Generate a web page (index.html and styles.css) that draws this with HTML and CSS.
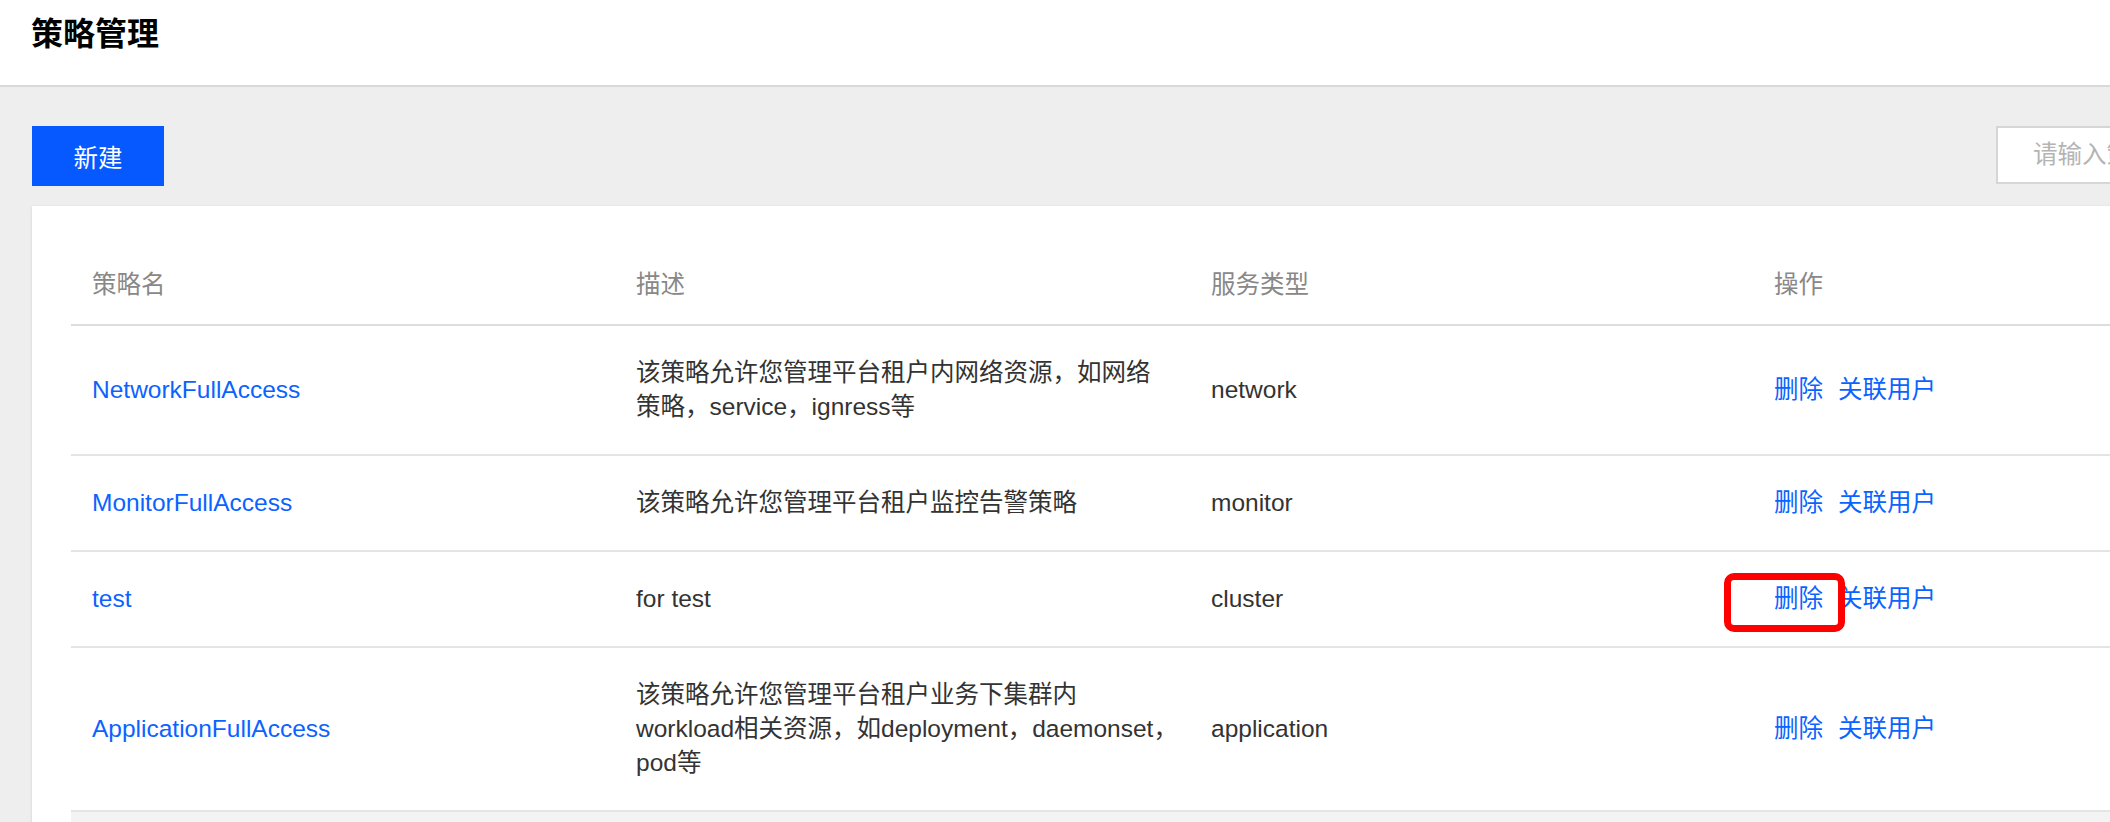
FILE: index.html
```html
<!DOCTYPE html>
<html lang="zh-CN">
<head>
<meta charset="utf-8">
<title>策略管理</title>
<link rel="stylesheet" href="styles.css">
</head>
<body>
<header class="page-header">
  <h1 class="page-title">策略管理</h1>
</header>
<main class="content">
  <div class="toolbar">
    <button class="btn-primary" type="button">新建</button>
    <div class="search">
      <input class="search-input" type="text" placeholder="请输入策略名">
    </div>
  </div>
  <section class="card">
    <div class="table">
      <div class="tr th">
        <div class="td">策略名</div>
        <div class="td">描述</div>
        <div class="td">服务类型</div>
        <div class="td">操作</div>
      </div>
      <div class="tr">
        <div class="td"><a class="link" href="#">NetworkFullAccess</a></div>
        <div class="td desc">该策略允许您管理平台租户内网络资源，如网络<br>策略，service，ignress等</div>
        <div class="td">network</div>
        <div class="td ops"><a class="link op" href="#">删除</a><a class="link op" href="#">关联用户</a></div>
      </div>
      <div class="tr">
        <div class="td"><a class="link" href="#">MonitorFullAccess</a></div>
        <div class="td desc">该策略允许您管理平台租户监控告警策略</div>
        <div class="td">monitor</div>
        <div class="td ops"><a class="link op" href="#">删除</a><a class="link op" href="#">关联用户</a></div>
      </div>
      <div class="tr">
        <div class="td"><a class="link" href="#">test</a></div>
        <div class="td desc">for test</div>
        <div class="td">cluster</div>
        <div class="td ops"><a class="link op marked" href="#">删除</a><a class="link op" href="#">关联用户</a></div>
      </div>
      <div class="tr">
        <div class="td"><a class="link" href="#">ApplicationFullAccess</a></div>
        <div class="td desc">该策略允许您管理平台租户业务下集群内<br>workload相关资源，如deployment，daemonset，<br>pod等</div>
        <div class="td">application</div>
        <div class="td ops"><a class="link op" href="#">删除</a><a class="link op" href="#">关联用户</a></div>
      </div>
      <div class="table-foot"></div>
    </div>
  </section>
</main>
</body>
</html>
```

FILE: styles.css
```css
*, *::before, *::after {
  box-sizing: border-box;
}

html, body {
  margin: 0;
  padding: 0;
}

body {
  background: #eeeeee;
  font-family: "Liberation Sans", "Noto Sans CJK SC", sans-serif;
  font-size: 24.5px;
  color: #333333;
  overflow: hidden;
  width: 2110px;
  height: 822px;
}

.page-header {
  height: 87px;
  background: #ffffff;
  border-bottom: 2px solid #d9d9d9;
  padding: 14px 0 0 31px;
}

.page-title {
  margin: 0;
  font-size: 32px;
  line-height: 40px;
  font-weight: bold;
  color: #000000;
}

.content {
  width: 2240px;
  padding: 39px 32px 0 32px;
}

.toolbar {
  display: flex;
  justify-content: space-between;
  align-items: flex-start;
}

.btn-primary {
  width: 132px;
  height: 60px;
  border: 0;
  background: #0658ff;
  color: #ffffff;
  font-family: inherit;
  font-size: 24.5px;
  padding: 0;
  cursor: pointer;
}

.search {
  width: 212px;
}

.search-input {
  width: 100%;
  height: 58px;
  border: 2px solid #d6d6d6;
  background: #ffffff;
  padding: 0 0 0 35px;
  font-family: inherit;
  font-size: 24.5px;
  color: #333333;
  outline: none;
}

.search-input::placeholder {
  color: #b4b4b4;
}

.card {
  margin-top: 20px;
  background: #ffffff;
  box-shadow: 0 1px 3px rgba(0, 0, 0, 0.12);
  padding: 40px 39px 0 39px;
  height: 640px;
}

.tr {
  display: grid;
  grid-template-columns: 544px 575px 563px 1fr;
  align-items: center;
  padding: 30px 0;
  border-bottom: 2px solid #e4e4e4;
  line-height: 34px;
}

.tr.th {
  padding: 22px 0;
  color: #888888;
  border-bottom-color: #dddddd;
}

.td {
  padding-left: 21px;
}

.link {
  color: #0b63ff;
  text-decoration: none;
}

.ops {
  display: flex;
  align-items: center;
}

.op {
  display: inline-block;
  height: 34px;
  margin-right: 15px;
}

.marked {
  position: relative;
}

.marked::after {
  content: "";
  position: absolute;
  left: -50px;
  top: -9px;
  width: 121px;
  height: 59px;
  border: 7px solid #ff0000;
  border-radius: 10px;
  pointer-events: none;
}

.table-foot {
  height: 40px;
  background: #f3f3f3;
}
```
